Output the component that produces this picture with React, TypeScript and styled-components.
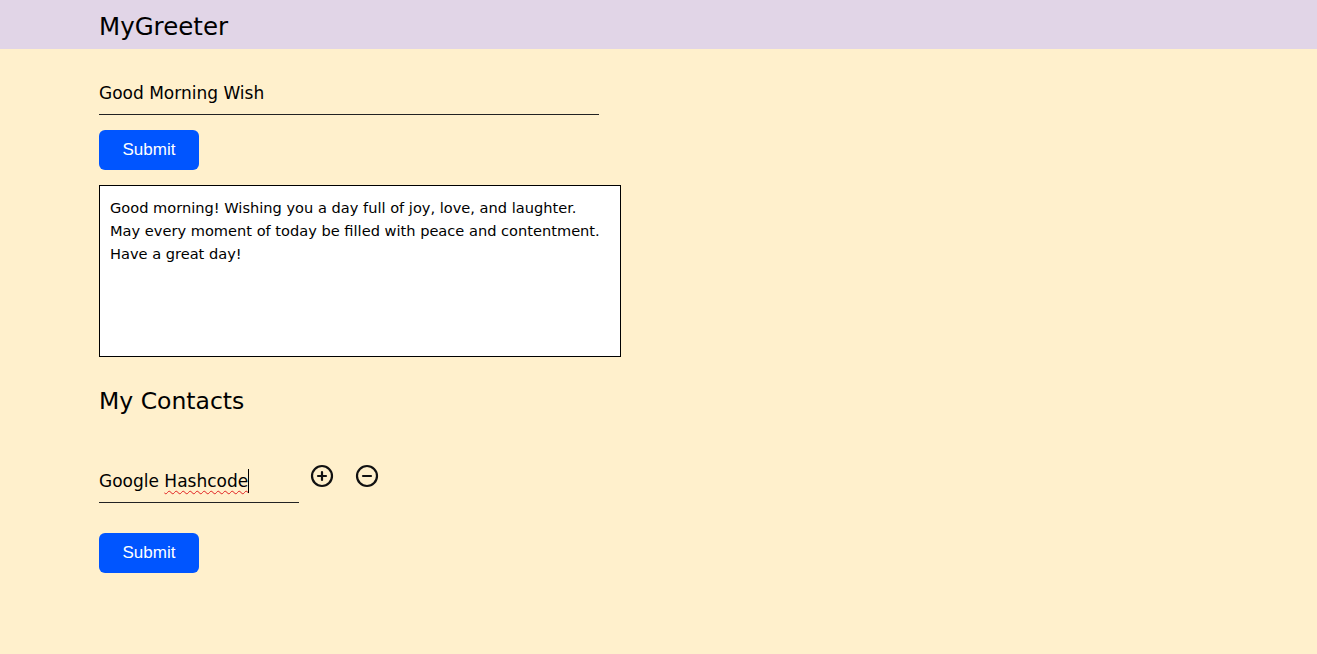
import * as React from 'react'
import styled, { createGlobalStyle } from 'styled-components'
import { CirclePlus, CircleMinus } from 'lucide-react'

const GlobalStyle = createGlobalStyle`
  html, body {
    margin: 0;
    padding: 0;
    background: #fff0cc;
  }

  body {
    font-family: 'Comic Sans MS', 'DejaVu Sans', sans-serif;
    color: #000;
  }
`

const greeting =
  'Good morning! Wishing you a day full of joy, love, and laughter. May every moment of today be filled with peace and contentment. Have a great day!'

const App: React.FunctionComponent = () => (
  <Page>
    <GlobalStyle />
    <Header>
      <Brand>MyGreeter</Brand>
    </Header>
    <Main>
      <Field width={500}>
        <FieldText>Good Morning Wish</FieldText>
      </Field>
      <Button>Submit</Button>
      <Message readOnly value={greeting} />

      <Heading>My Contacts</Heading>
      <ContactRow>
        <Field width={200}>
          <FieldText>
            Google <Misspelled>Hashcode</Misspelled>
            <Caret />
          </FieldText>
        </Field>
        <Actions>
          <IconButton aria-label='add contact'>
            <CirclePlus size={24} strokeWidth={2.2} />
          </IconButton>
          <IconButton aria-label='remove contact'>
            <CircleMinus size={24} strokeWidth={2.2} />
          </IconButton>
        </Actions>
      </ContactRow>
      <Button spacing={30}>Submit</Button>
    </Main>
  </Page>
)

export { App as default }

const Page = styled.div`
  min-height: 654px;
  background: #fff0cc;
`

const Header = styled.header`
  height: 49px;
  box-sizing: border-box;
  padding: 3px 0 0 99px;
  background: #e1d5e7;
  display: flex;
  align-items: center;
`

const Brand = styled.h1`
  margin: 0;
  font-size: 24.5px;
  font-weight: normal;
`

const Main = styled.main`
  padding: 27px 0 0 99px;
  display: flex;
  flex-direction: column;
  align-items: flex-start;
`

const Field = styled.div<{ width: number }>`
  width: ${p => p.width}px;
  height: 39px;
  padding-bottom: 9px;
  border-bottom: 1px solid #222;
  display: flex;
  align-items: flex-end;
  box-sizing: border-box;
`

const FieldText = styled.span`
  font-size: 17px;
  line-height: 24px;
  display: flex;
  align-items: center;
  white-space: pre;
`

const Misspelled = styled.span`
  text-decoration: underline wavy #e02020;
  text-decoration-thickness: 1px;
  text-underline-offset: 3px;
`

const Caret = styled.span`
  display: inline-block;
  width: 1px;
  height: 24px;
  background: #000;
`

const Button = styled.button<{ spacing?: number }>`
  margin-top: ${p => p.spacing ?? 15}px;
  width: 100px;
  height: 40px;
  border: none;
  border-radius: 6px;
  background: #0055ff;
  color: #fff;
  font-family: 'Liberation Sans', Arial, sans-serif;
  font-size: 17px;
`

const Message = styled.textarea`
  margin-top: 15px;
  width: 522px;
  height: 172px;
  box-sizing: border-box;
  border: 1px solid #000;
  background: #fff;
  padding: 10px 10px;
  font-family: inherit;
  font-size: 14.6px;
  line-height: 23px;
  resize: none;
  outline: none;
`

const Heading = styled.h2`
  margin: 29px 0 0;
  font-size: 23.5px;
  line-height: 30px;
  font-weight: normal;
`

const ContactRow = styled.div`
  margin-top: 48px;
  display: flex;
  align-items: flex-start;
  gap: 11px;
`

const Actions = styled.div`
  display: flex;
  gap: 21px;
`

const IconButton = styled.button`
  border: none;
  background: none;
  padding: 0;
  width: 24px;
  height: 24px;
  display: flex;
  color: #111;
`
